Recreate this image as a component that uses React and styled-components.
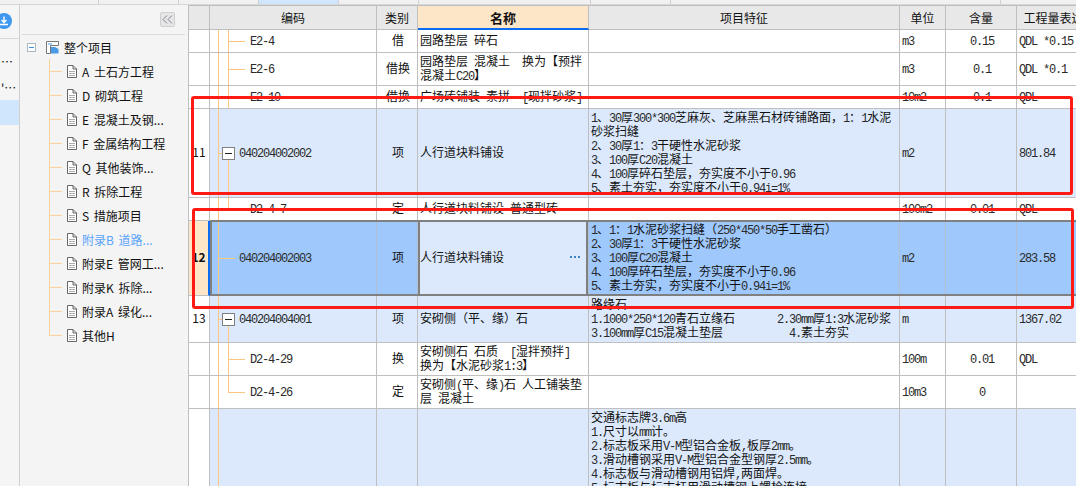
import styled, {createGlobalStyle} from "styled-components";

const GlobalStyle = createGlobalStyle`
  html, body {
    margin: 0;
    padding: 0;
    background: #fff;
    overflow: hidden;
  }
  * {
    box-sizing: border-box;
  }
`;

const GRID = "#bfbfbf";
const TREE = "#fec67e";
const COLUMNS = "21px 167px 41px 171px 311px 46px 71px 86px";

const Page = styled.div`
  position: relative;
  width: 1076px;
  height: 486px;
  overflow: hidden;
  display: flex;
  flex-direction: column;
  font-family: "Noto Sans CJK SC", "Liberation Sans", sans-serif;
  font-size: 12px;
  color: #111;
`;

const TabStrip = styled.div`
  flex: none;
  height: 5px;
  display: flex;
  background: #f1f1f1;
  border-bottom: 1px solid #d6d6d6;
`;

const Tab = styled.div`
  flex: none;
  width: ${(p) => p.$width}px;
  border-right: 1px solid #d0d0d0;
  background: ${(p) => (p.$active ? "#cfe6fd" : "transparent")};
`;

const Body = styled.div`
  flex: 1;
  min-height: 0;
  display: flex;
`;

const Rail = styled.div`
  flex: none;
  width: 20px;
  background: #f5f5f5;
  border-right: 1px solid #cfcfcf;
  overflow: hidden;
`;

const RailTop = styled.div`
  height: 34px;
  padding-top: 7px;
  margin-bottom: 10px;
  border-bottom: 1px solid #d8d8d8;
  overflow: hidden;
`;

const RailIcon = styled.svg`
  display: block;
  margin-left: -5px;
`;

const RailItem = styled.div`
  height: ${(p) => p.$height}px;
  display: flex;
  align-items: center;
  padding-left: 1px;
  white-space: nowrap;
  background: ${(p) => (p.$active ? "#cfe6fd" : "transparent")};
`;

const Sidebar = styled.div`
  flex: none;
  width: 168px;
  background: #f4f4f4;
`;

const SideHeader = styled.div`
  height: 30px;
  margin: 0 3px 0 2px;
  padding-right: 10px;
  display: flex;
  align-items: center;
  justify-content: flex-end;
  border-bottom: 1px solid #dcdcdc;
`;

const CollapseButton = styled.div`
  width: 15px;
  height: 15px;
  display: flex;
  align-items: center;
  justify-content: center;
  background: #e6e6e6;
  border: 1px solid #cfcfcf;
  border-radius: 2px;
`;

const RootRow = styled.div`
  height: 24px;
  padding-left: 7px;
  display: flex;
  align-items: center;
`;

const RootToggle = styled.div`
  width: 9px;
  height: 9px;
  margin-right: 10px;
  display: flex;
  align-items: center;
  justify-content: center;
  border: 1px solid #a9b7c2;
  background: #fff;
  &::before {
    content: "";
    width: 5px;
    height: 1px;
    background: #3f8fd8;
  }
`;

const RootLabel = styled.span`
  margin-left: 5px;
`;

const TreeItem = styled.div`
  position: relative;
  height: 24px;
  padding-left: 46px;
  display: flex;
  align-items: center;
  gap: 5px;
  white-space: pre;
  word-spacing: 2px;
  color: ${(p) => (p.$active ? "#5aa4fb" : "#111")};
  &::before {
    content: "";
    position: absolute;
    left: 29px;
    top: 0;
    bottom: ${(p) => (p.$last ? "12px" : "0")};
    width: 1px;
    background: #fbd09a;
  }
  &::after {
    content: "";
    position: absolute;
    left: 29px;
    top: 12px;
    width: 13px;
    height: 1px;
    background: #fbd09a;
  }
`;

const Table = styled.div`
  flex: 1;
  min-width: 0;
  overflow: hidden;
  border-left: 1px solid ${GRID};
  border-top: 1px solid ${GRID};
  background: #fff;
`;

const HeaderRow = styled.div`
  display: grid;
  grid-template-columns: ${COLUMNS};
  height: 24px;
  width: 914px;
  background: #e8e8e8;
`;

const HeaderCell = styled.div`
  display: flex;
  align-items: center;
  justify-content: center;
  border-right: 1px solid ${GRID};
  border-bottom: ${(p) => (p.$current ? "2px solid #0a6cf0" : `1px solid ${GRID}`)};
  background: ${(p) => (p.$current ? "#fde6c8" : "transparent")};
  font-weight: ${(p) => (p.$current ? 700 : 400)};
  font-size: ${(p) => (p.$current ? "13px" : "12px")};
  white-space: nowrap;
`;

const toneColor = {plain: "#fff", item: "#dce9fd", selected: "#9fc8fd"};

const Row = styled.div`
  position: relative;
  display: grid;
  grid-template-columns: ${COLUMNS};
  height: ${(p) => p.$height}px;
  width: 914px;
  background: ${(p) => toneColor[p.$tone]};
  ${(p) =>
    p.$tone === "selected" &&
    `&::after {
      content: "";
      position: absolute;
      left: 21px;
      right: 0;
      top: -1px;
      bottom: 0;
      border: 2px solid #808080;
      border-right: none;
      pointer-events: none;
    }`}
`;

const Cell = styled.div`
  position: relative;
  min-width: 0;
  display: flex;
  align-items: ${(p) => (p.$top ? "flex-start" : "center")};
  justify-content: ${(p) => (p.$center ? "center" : "flex-start")};
  padding: ${(p) => (p.$top ? "1px 0 0 2px" : "0 0 2px 2px")};
  border-right: 1px solid ${(p) => (p.$tone === "selected" ? "#b0bfd2" : GRID)};
  border-bottom: 1px solid ${GRID};
  line-height: 14px;
  white-space: pre;
  overflow: hidden;
`;

const NumCell = styled(Cell)`
  justify-content: center;
  padding: 0 0 2px;
  background: ${(p) => (p.$tone === "selected" ? "#fde6c8" : "#fff")};
  font-weight: ${(p) => (p.$tone === "selected" ? 700 : 400)};
  ${(p) => p.$tone === "selected" && "border-right: 2px solid #0a6cf0;"}
`;

const CodeCell = styled(Cell)`
  padding-left: ${(p) => (p.$leaf ? 40 : 29)}px;
`;

const NameCell = styled(Cell)`
  justify-content: space-between;
  ${(p) =>
    p.$tone === "selected" &&
    `background: #dce9fd;
    box-shadow: inset 2px 0 #808080, inset -2px 0 #808080;`}
`;

const MoreDots = styled.span`
  flex: none;
  width: 10px;
  height: 2px;
  margin-right: 8px;
  background: repeating-linear-gradient(to right, #3a85c9 0 2px, transparent 2px 4px);
`;

const Latin = styled.span`
  font-family: "Liberation Mono", monospace;
  font-size: 12px;
  line-height: 0;
  letter-spacing: -1.2px;
  color: #2a2a2a;
`;

const TreeLine = styled.i`
  position: absolute;
  background: ${TREE};
  left: ${(p) => p.$left}px;
  top: ${(p) => p.$top ?? "0"};
  bottom: ${(p) => p.$bottom ?? "0"};
  width: 1px;
`;

const TreeTick = styled.i`
  position: absolute;
  background: ${TREE};
  left: ${(p) => p.$left}px;
  top: 50%;
  width: ${(p) => p.$width}px;
  height: 1px;
`;

const ToggleBox = styled.i`
  position: absolute;
  left: 12px;
  top: 50%;
  width: 13px;
  height: 13px;
  margin-top: -6px;
  display: flex;
  align-items: center;
  justify-content: center;
  background: #fff;
  border: 1px solid #808080;
  &::before {
    content: "";
    width: 7px;
    height: 1px;
    background: #222;
  }
`;

const Callout = styled.div`
  position: absolute;
  left: ${(p) => p.$x}px;
  top: ${(p) => p.$y}px;
  width: ${(p) => p.$w}px;
  height: ${(p) => p.$h}px;
  border: 3px solid #ff1a14;
  border-radius: 3px;
  pointer-events: none;
`;

const tabs = [79, 80, 80, 80, 80, 172, 80, 330];

const sideItems = [
    "A 土石方工程",
    "D 砌筑工程",
    "E 混凝土及钢...",
    "F 金属结构工程",
    "Q 其他装饰...",
    "R 拆除工程",
    "S 措施项目",
    "附录B 道路...",
    "附录E 管网工...",
    "附录K 拆除...",
    "附录A 绿化...",
    "其他H",
];

const features11 = "1、30厚300*300芝麻灰、芝麻黑石材砖铺路面，1：1水泥\n砂浆扫缝\n2、30厚1：3干硬性水泥砂浆\n3、100厚C20混凝土\n4、100厚碎石垫层，夯实度不小于0.96\n5、素土夯实，夯实度不小于0.94i=1%";
const features12 = "1、1：1水泥砂浆扫缝（250*450*50手工凿石）\n2、30厚1：3干硬性水泥砂浆\n3、100厚C20混凝土\n4、100厚碎石垫层，夯实度不小于0.96\n5、素土夯实，夯实度不小于0.94i=1%";
const features13 = "路缘石\n1.1000*250*120青石立缘石       2.30mm厚1:3水泥砂浆\n3.100mm厚C15混凝土垫层           4.素土夯实";
const featuresLast = "交通标志牌3.6m高\n1.尺寸以mm计。\n2.标志板采用V-M型铝合金板,板厚2mm。\n3.滑动槽钢采用V-M型铝合金型钢厚2.5mm。\n4.标志板与滑动槽钢用铝焊,两面焊。\n5.标志板与标志杆用滑动槽钢上螺栓连接";

const rows = [
    {height: 23, tone: "plain", tree: "leaf", code: "E2-4", type: "借", name: "园路垫层 碎石", unit: "m3", qty: "0.15", expr: "QDL *0.15"},
    {height: 33, tone: "plain", tree: "leaf", code: "E2-6", type: "借换", name: "园路垫层 混凝土  换为【预拌\n混凝土C20】", unit: "m3", qty: "0.1", expr: "QDL *0.1"},
    {height: 23, tone: "plain", tree: "leaf", code: "E2-10", type: "借换", name: "广场砖铺装 素拼  [现拌砂浆]", unit: "10m2", qty: "0.1", expr: "QDL"},
    {height: 89, tone: "item", tree: "parent", num: "11", code: "040204002002", type: "项", name: "人行道块料铺设", features: features11, unit: "m2", expr: "801.84"},
    {height: 23, tone: "plain", tree: "lastLeaf", code: "D2-4-7", type: "定", name: "人行道块料铺设 普通型砖", unit: "100m2", qty: "0.01", expr: "QDL"},
    {height: 75, tone: "selected", tree: "single", num: "12", code: "040204002003", type: "项", name: "人行道块料铺设", features: features12, unit: "m2", expr: "283.58"},
    {height: 47, tone: "item", tree: "parent", num: "13", code: "040204004001", type: "项", name: "安砌侧（平、缘）石", features: features13, unit: "m", expr: "1367.02"},
    {height: 33, tone: "plain", tree: "leaf", code: "D2-4-29", type: "换", name: "安砌侧石 石质  [湿拌预拌]\n换为【水泥砂浆1:3】", unit: "100m", qty: "0.01", expr: "QDL"},
    {height: 33, tone: "plain", tree: "lastLeaf", code: "D2-4-26", type: "定", name: "安砌侧(平、缘)石 人工铺装垫\n层 混凝土", unit: "10m3", qty: "0"},
    {height: 100, tone: "item", tree: "none", top: true, features: featuresLast},
];

// the screenshot font has half width latin, so ascii runs get their own span
function Rich({text}) {
    if (!text) return null;
    const parts = text.split(/([\x20-\x7e]+)/).filter(Boolean);
    return (
        <span>
            {parts.map((part, i) =>
                /^[\x20-\x7e]/.test(part) ? <Latin key={i}>{part}</Latin> : part
            )}
        </span>
    );
}

function TreeGuides({kind}) {
    return (
        <>
            <TreeLine $left={8} />
            {kind === "leaf" && <TreeLine $left={18} />}
            {kind === "lastLeaf" && <TreeLine $left={18} $bottom="50%" />}
            {(kind === "leaf" || kind === "lastLeaf") && <TreeTick $left={18} $width={17} />}
            {kind === "single" && <TreeTick $left={8} $width={17} />}
            {kind === "parent" && (
                <>
                    <TreeLine $left={18} $top="50%" />
                    <TreeTick $left={8} $width={5} />
                    <ToggleBox />
                </>
            )}
        </>
    );
}

function DocIcon() {
    return (
        <svg width="11" height="13" viewBox="0 0 11 13" fill="none">
            <path d="M1.5 .5H7L10.5 4V12.5H1.5Z" fill="#fff" stroke="#666" />
            <path d="M7 .5V4H10.5" stroke="#666" />
            <path d="M3 6.5H9M3 8.5H9M3 10.5H9" stroke="#aaa" />
        </svg>
    );
}

function RootIcon() {
    return (
        <svg width="13" height="13" viewBox="0 0 13 13" fill="none">
            <path d="M.5 .5H12.5V4.5H4.5V12.5H.5Z" fill="#fff" stroke="#777" />
            <path d="M5 6H9L12.5 8V12.5H5Z" fill="#4a9ae6" />
            <path d="M2 3H6" stroke="#4a9ae6" />
        </svg>
    );
}

function TableRow({row}) {
    const {tone} = row;
    const isLeaf = row.tree === "leaf" || row.tree === "lastLeaf";
    return (
        <Row $height={row.height} $tone={tone}>
            <NumCell $tone={tone}>{row.num}</NumCell>
            <CodeCell $tone={tone} $leaf={isLeaf}>
                <TreeGuides kind={row.tree} />
                <Rich text={row.code} />
            </CodeCell>
            <Cell $tone={tone} $center>{row.type}</Cell>
            <NameCell $tone={tone}>
                <Rich text={row.name} />
                {tone === "selected" && <MoreDots />}
            </NameCell>
            <Cell $tone={tone} $top={row.top}>
                <Rich text={row.features} />
            </Cell>
            <Cell $tone={tone}><Rich text={row.unit} /></Cell>
            <Cell $tone={tone} $center><Rich text={row.qty} /></Cell>
            <Cell $tone={tone}><Rich text={row.expr} /></Cell>
        </Row>
    );
}

function App() {
    return (
        <Page>
            <GlobalStyle />
            <TabStrip>
                {tabs.map((width, i) => (
                    <Tab key={i} $width={i === 0 ? width + 20 : width} $active={i === 3} />
                ))}
            </TabStrip>
            <Body>
                <Rail>
                    <RailTop>
                        <RailIcon width="20" height="20" viewBox="0 0 20 20">
                            <circle cx="9" cy="9" r="8" fill="#3f97ef" />
                            <svg x="1" y="1" width="16" height="16" viewBox="0 0 16 16">
                                <path d="M8 3.5V9M5.5 7L8 9.5L10.5 7M4 11.5H12" fill="none" stroke="#fff" strokeWidth="1.4" />
                            </svg>
                        </RailIcon>
                    </RailTop>
                    <RailItem $height={25}>…</RailItem>
                    <RailItem $height={26}>'…</RailItem>
                    <RailItem $height={25} $active />
                </Rail>
                <Sidebar>
                    <SideHeader>
                        <CollapseButton>
                            <svg width="11" height="9" viewBox="0 0 11 9" fill="none">
                                <path d="M5 .5L1 4.5L5 8.5M10 .5L6 4.5L10 8.5" stroke="#808890" />
                            </svg>
                        </CollapseButton>
                    </SideHeader>
                    <RootRow>
                        <RootToggle />
                        <RootIcon />
                        <RootLabel>整个项目</RootLabel>
                    </RootRow>
                    {sideItems.map((label, i) => (
                        <TreeItem key={label} $active={i === 7} $last={i === sideItems.length - 1}>
                            <DocIcon />
                            <span>{label}</span>
                        </TreeItem>
                    ))}
                </Sidebar>
                <Table>
                    <HeaderRow>
                        <HeaderCell />
                        <HeaderCell>编码</HeaderCell>
                        <HeaderCell>类别</HeaderCell>
                        <HeaderCell $current>名称</HeaderCell>
                        <HeaderCell>项目特征</HeaderCell>
                        <HeaderCell>单位</HeaderCell>
                        <HeaderCell>含量</HeaderCell>
                        <HeaderCell>工程量表达式</HeaderCell>
                    </HeaderRow>
                    {rows.map((row, i) => (
                        <TableRow key={i} row={row} />
                    ))}
                </Table>
            </Body>
            <Callout $x={191} $y={96} $w={882} $h={99} />
            <Callout $x={192} $y={208} $w={882} $h={101} />
        </Page>
    );
}

export default App;
